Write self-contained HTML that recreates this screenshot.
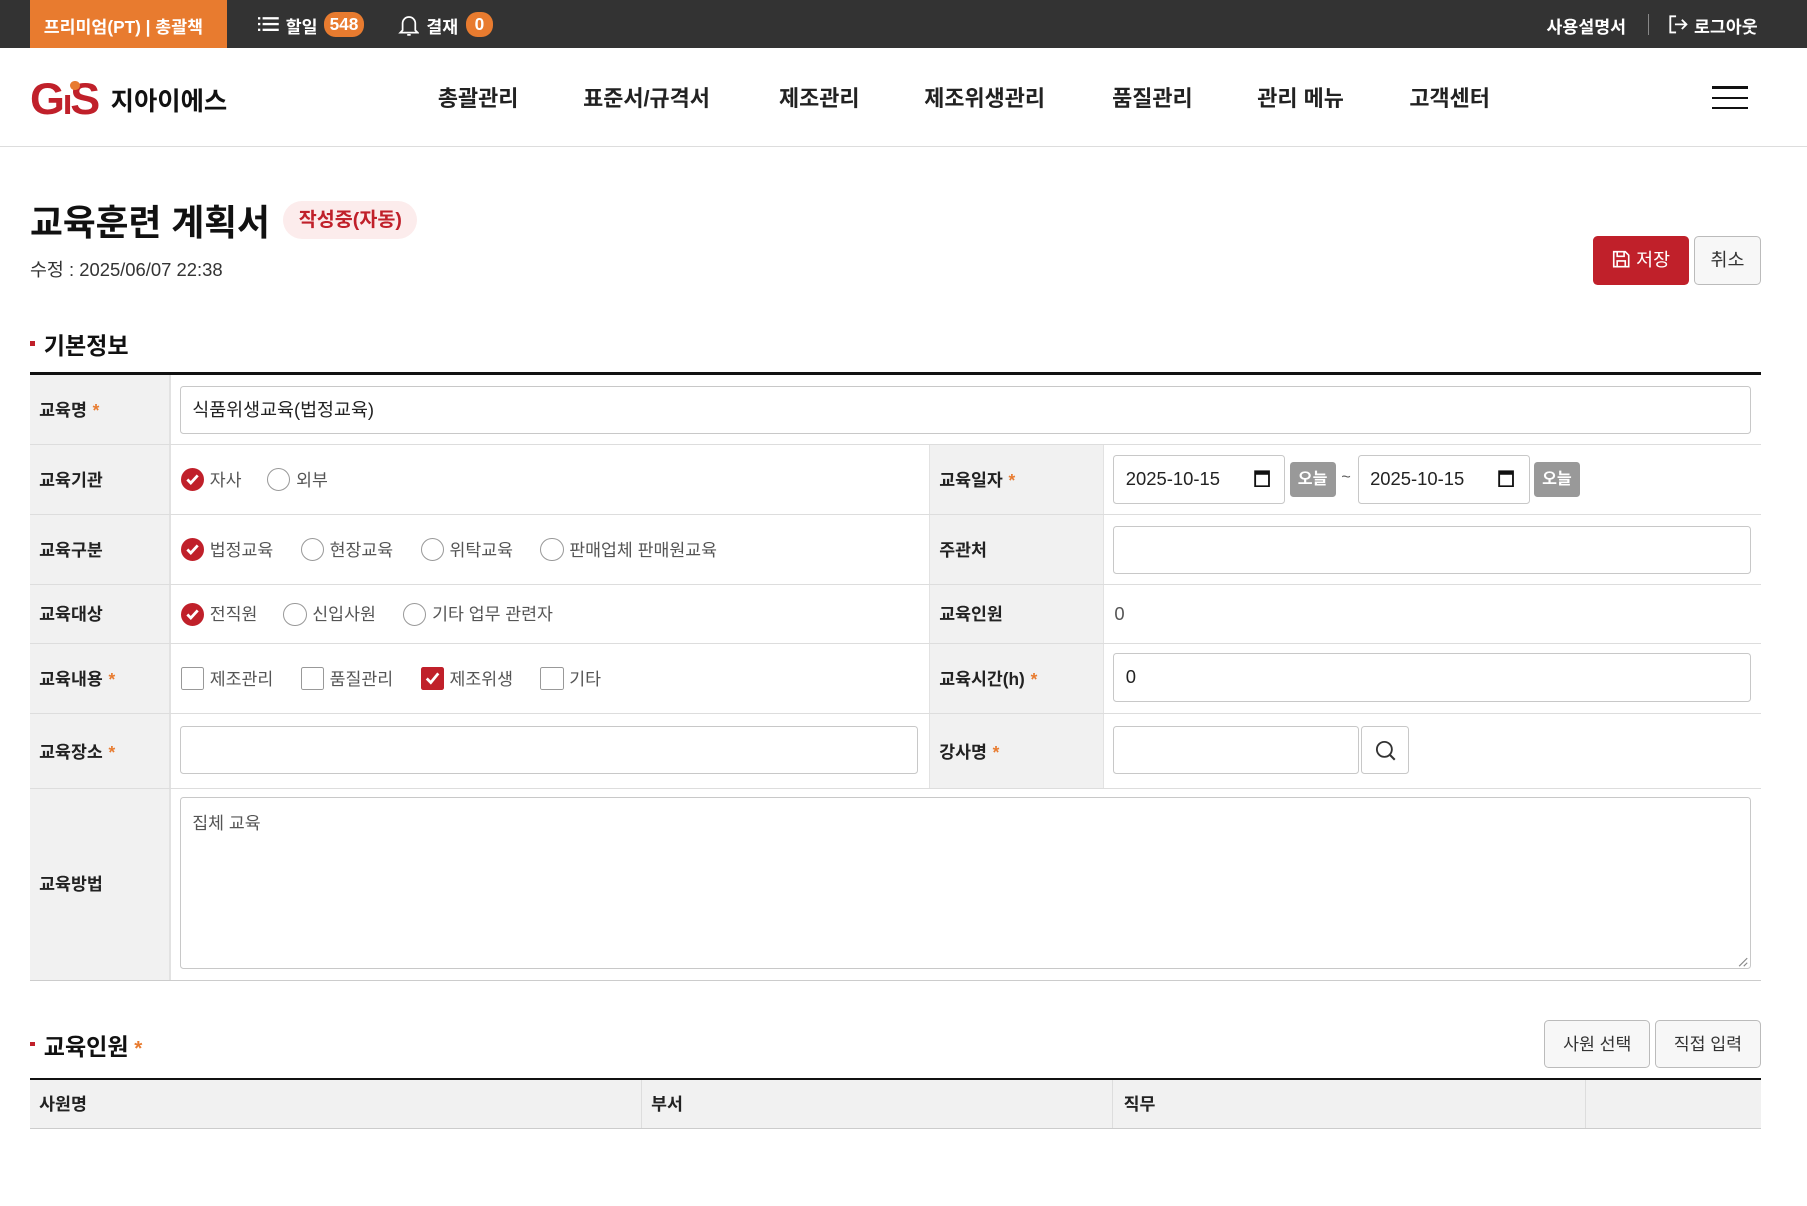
<!DOCTYPE html>
<html><head><meta charset="utf-8"><style>
html,body{margin:0;padding:0;width:1807px;height:1206px;overflow:hidden;background:#fff}
#w{position:relative;width:1568px;height:1047px;zoom:1.15242;font-family:"Liberation Sans","Noto Sans CJK KR",sans-serif;color:#222}
.a{position:absolute}
.top{left:0;top:0;width:1568px;height:42px;background:#333}
.wt{color:#fff;font-weight:bold;font-size:15px}
.bd{border-radius:10px;background:#e87b2f;color:#fff;font-weight:bold;font-size:15px;padding:1px 5px;line-height:20px}
.nav{font-size:19px;font-weight:bold;color:#222;top:71px}
.lbl{font-size:15px;font-weight:bold;color:#222;margin-top:-2px}
.star{color:#e87b2f;margin-left:5px}
.inp{border:1px solid #c8c8c8;border-radius:3px;background:#fff;box-sizing:border-box;font-size:16px;color:#222;padding-left:10px}
.hl{height:1px;background:#ddd;left:26px;width:1502px}
.opt{font-size:15px;color:#555;margin-top:-2px}
.rc{width:20px;height:20px;border-radius:50%;border:1px solid #999;box-sizing:border-box;background:#fff}
.rc.on{background:#c0202a;border-color:#c0202a}
.cb{width:20px;height:20px;border:1px solid #999;box-sizing:border-box;background:#fff;border-radius:2px}
.cb.on{background:#c0202a;border-color:#c0202a}
.btn{border:1px solid #bbb;border-radius:4px;background:#f7f7f7;box-sizing:border-box;font-size:15px;color:#333;text-align:center}
.today{background:#999;color:#fff;font-size:14px;font-weight:bold;border-radius:3px;width:40px;height:30px;line-height:30px;text-align:center}
</style></head><body><div id="w">
<div class="a top"></div>
<div class="a" style="left:26px;top:0;width:171px;height:42px;background:#e87b2f"></div>
<div class="a wt" style="left:38px;top:11px">프리미엄(PT) | 총괄책</div>
<svg class="a" style="left:224px;top:14px" width="18" height="14"><g fill="#fff"><rect x="0" y="1" width="2" height="2"/><rect x="0" y="6" width="2" height="2"/><rect x="0" y="11" width="2" height="2"/><rect x="4" y="1" width="14" height="2"/><rect x="4" y="6" width="14" height="2"/><rect x="4" y="11" width="14" height="2"/></g></svg>
<div class="a wt" style="left:248px;top:11px">할일</div>
<div class="a bd" style="left:281px;top:10px">548</div>
<svg class="a" style="left:345px;top:11px" width="19" height="21"><path d="M4 15V9a5.5 5.5 0 0 1 11 0v6l2 2H2z M8 19h3" fill="none" stroke="#fff" stroke-width="1.5"/></svg>
<div class="a wt" style="left:370px;top:11px">결재</div>
<div class="a bd" style="left:404px;top:10px;width:14px;text-align:center">0</div>
<div class="a wt" style="left:1342px;top:11px">사용설명서</div>
<div class="a" style="left:1430px;top:12px;width:1px;height:18px;background:#888"></div>
<svg class="a" style="left:1447px;top:12px" width="18" height="18"><path d="M7 2H2v14h5 M6 9h10 M12 5l4 4-4 4" fill="none" stroke="#fff" stroke-width="1.6"/></svg>
<div class="a wt" style="left:1470px;top:11px">로그아웃</div>

<div class="a" style="left:26px;top:63px;font-size:39px;font-weight:900;color:#c0202a;letter-spacing:-2px;font-family:'Liberation Sans',sans-serif">G<span style="font-size:31px">ı</span>S</div>
<div class="a" style="left:61px;top:70px;width:8px;height:8px;border-radius:50%;background:#e87b2f"></div>
<div class="a" style="left:96px;top:71px;font-size:22px;font-weight:bold;color:#111">지아이에스</div>
<div class="a nav" style="left:380px">총괄관리</div>
<div class="a nav" style="left:506px">표준서/규격서</div>
<div class="a nav" style="left:676px">제조관리</div>
<div class="a nav" style="left:802px">제조위생관리</div>
<div class="a nav" style="left:965px">품질관리</div>
<div class="a nav" style="left:1091px">관리 메뉴</div>
<div class="a nav" style="left:1223px">고객센터</div>
<div class="a" style="left:1486px;top:75px;width:31px;height:2px;background:#111"></div>
<div class="a" style="left:1486px;top:84px;width:31px;height:2px;background:#111"></div>
<div class="a" style="left:1486px;top:93px;width:31px;height:2px;background:#111"></div>
<div class="a" style="left:0;top:127px;width:1568px;height:1px;background:#ddd"></div>

<div class="a" style="left:26px;top:169px;font-size:31px;font-weight:bold;color:#111">교육훈련 계획서</div>
<div class="a" style="left:246px;top:174px;width:116px;height:33px;border-radius:17px;background:#fcecec;color:#c0202a;font-size:17px;font-weight:bold;text-align:center;line-height:33px">작성중(자동)</div>
<div class="a" style="left:26px;top:222px;font-size:16px;color:#333">수정 : 2025/06/07 22:38</div>
<div class="a" style="left:1382px;top:205px;width:84px;height:42px;background:#c0202a;border-radius:4px;color:#fff;font-size:16px;line-height:42px;text-align:center"><svg width="16" height="16" style="vertical-align:-2px;margin-right:5px"><path d="M1.5 1.5h10l3 3v10h-13z M4.5 1.5v4h6v-4 M4.5 14.5v-5h7v5" fill="none" stroke="#fff" stroke-width="1.4"/></svg>저장</div>
<div class="a btn" style="left:1470px;top:205px;width:58px;height:42px;line-height:40px;font-size:16px">취소</div>

<div class="a" style="left:26px;top:296px;width:4px;height:4px;background:#c0202a"></div>
<div class="a" style="left:38px;top:284px;font-size:20px;font-weight:bold;color:#111">기본정보</div>

<div class="a" style="left:26px;top:325px;width:121px;height:525px;background:#f1f1f1"></div>
<div class="a" style="left:806px;top:385px;width:151px;height:299px;background:#f1f1f1"></div>
<div class="a" style="left:147px;top:325px;width:1px;height:525px;background:#e2e2e2"></div>
<div class="a" style="left:806px;top:385px;width:1px;height:299px;background:#e2e2e2"></div>
<div class="a" style="left:957px;top:385px;width:1px;height:299px;background:#e2e2e2"></div>
<div class="a" style="left:26px;top:323px;width:1502px;height:2px;background:#111"></div>
<div class="a hl" style="top:385px"></div>
<div class="a hl" style="top:446px"></div>
<div class="a hl" style="top:507px"></div>
<div class="a hl" style="top:558px"></div>
<div class="a hl" style="top:619px"></div>
<div class="a hl" style="top:684px"></div>
<div class="a hl" style="top:850px;background:#ccc"></div>

<div class="a lbl" style="left:34px;top:346px">교육명<span class="star">*</span></div>
<div class="a inp" style="left:156px;top:335px;width:1363px;height:42px;line-height:40px">식품위생교육(법정교육)</div>

<div class="a lbl" style="left:34px;top:406px">교육기관</div>
<div class="a rc on" style="left:157px;top:406px"></div><svg class="a" style="left:157px;top:406px" width="20" height="20"><path d="M5.5 10l3 3 6-6.5" fill="none" stroke="#fff" stroke-width="2.4"/></svg>
<div class="a opt" style="left:182px;top:406px">자사</div>
<div class="a rc" style="left:232px;top:406px"></div><div class="a opt" style="left:257px;top:406px">외부</div>

<div class="a lbl" style="left:815px;top:406px">교육일자<span class="star">*</span></div>
<div class="a inp" style="left:966px;top:395px;width:149px;height:42px;line-height:40px">2025-10-15</div>
<svg class="a" style="left:1088px;top:407px" width="14" height="16"><rect x="1" y="2" width="12" height="13" fill="none" stroke="#111" stroke-width="1.6"/><rect x="1" y="2" width="12" height="3" fill="#111"/></svg>
<div class="a today" style="left:1119px;top:401px">오늘</div>
<div class="a" style="left:1164px;top:406px;font-size:14px;color:#555">~</div>
<div class="a inp" style="left:1178px;top:395px;width:150px;height:42px;line-height:40px">2025-10-15</div>
<svg class="a" style="left:1300px;top:407px" width="14" height="16"><rect x="1" y="2" width="12" height="13" fill="none" stroke="#111" stroke-width="1.6"/><rect x="1" y="2" width="12" height="3" fill="#111"/></svg>
<div class="a today" style="left:1331px;top:401px">오늘</div>

<div class="a lbl" style="left:34px;top:467px">교육구분</div>
<div class="a rc on" style="left:157px;top:467px"></div><svg class="a" style="left:157px;top:467px" width="20" height="20"><path d="M5.5 10l3 3 6-6.5" fill="none" stroke="#fff" stroke-width="2.4"/></svg>
<div class="a opt" style="left:182px;top:467px">법정교육</div>
<div class="a rc" style="left:261px;top:467px"></div><div class="a opt" style="left:286px;top:467px">현장교육</div>
<div class="a rc" style="left:365px;top:467px"></div><div class="a opt" style="left:390px;top:467px">위탁교육</div>
<div class="a rc" style="left:469px;top:467px"></div><div class="a opt" style="left:494px;top:467px">판매업체 판매원교육</div>
<div class="a lbl" style="left:815px;top:467px">주관처</div>
<div class="a inp" style="left:966px;top:456px;width:553px;height:42px"></div>

<div class="a lbl" style="left:34px;top:523px">교육대상</div>
<div class="a rc on" style="left:157px;top:523px"></div><svg class="a" style="left:157px;top:523px" width="20" height="20"><path d="M5.5 10l3 3 6-6.5" fill="none" stroke="#fff" stroke-width="2.4"/></svg>
<div class="a opt" style="left:182px;top:523px">전직원</div>
<div class="a rc" style="left:246px;top:523px"></div><div class="a opt" style="left:271px;top:523px">신입사원</div>
<div class="a rc" style="left:350px;top:523px"></div><div class="a opt" style="left:375px;top:523px">기타 업무 관련자</div>
<div class="a lbl" style="left:815px;top:523px">교육인원</div>
<div class="a" style="left:967px;top:523px;font-size:16px;color:#555">0</div>

<div class="a lbl" style="left:34px;top:579px">교육내용<span class="star">*</span></div>
<div class="a cb" style="left:157px;top:579px"></div><div class="a opt" style="left:182px;top:579px">제조관리</div>
<div class="a cb" style="left:261px;top:579px"></div><div class="a opt" style="left:286px;top:579px">품질관리</div>
<div class="a cb on" style="left:365px;top:579px"></div><svg class="a" style="left:365px;top:579px" width="20" height="20"><path d="M5 10l3.5 3.5 6.5-8" fill="none" stroke="#fff" stroke-width="2.4"/></svg>
<div class="a opt" style="left:390px;top:579px">제조위생</div>
<div class="a cb" style="left:469px;top:579px"></div><div class="a opt" style="left:494px;top:579px">기타</div>
<div class="a lbl" style="left:815px;top:579px">교육시간(h)<span class="star">*</span></div>
<div class="a inp" style="left:966px;top:567px;width:553px;height:42px;line-height:40px">0</div>

<div class="a lbl" style="left:34px;top:642px">교육장소<span class="star">*</span></div>
<div class="a inp" style="left:156px;top:630px;width:641px;height:42px"></div>
<div class="a lbl" style="left:815px;top:642px">강사명<span class="star">*</span></div>
<div class="a inp" style="left:966px;top:630px;width:213px;height:42px"></div>
<div class="a inp" style="left:1181px;top:630px;width:42px;height:42px;padding:0"></div>
<svg class="a" style="left:1192px;top:641px" width="20" height="20"><circle cx="9" cy="9" r="6.5" fill="none" stroke="#333" stroke-width="1.6"/><path d="M14 14l4 4" stroke="#333" stroke-width="1.8"/></svg>

<div class="a lbl" style="left:34px;top:757px">교육방법</div>
<div class="a inp" style="left:156px;top:692px;width:1363px;height:149px;font-size:15px;color:#555;padding-top:9px">집체 교육</div>
<svg class="a" style="left:1508px;top:830px" width="9" height="9"><path d="M8 1L1 8M8 5L5 8" stroke="#888" stroke-width="1"/></svg>

<div class="a" style="left:26px;top:904px;width:4px;height:4px;background:#c0202a"></div>
<div class="a" style="left:38px;top:892px;font-size:20px;font-weight:bold;color:#111">교육인원<span class="star" style="font-size:18px">*</span></div>
<div class="a btn" style="left:1340px;top:885px;width:92px;height:42px;line-height:40px">사원 선택</div>
<div class="a btn" style="left:1436px;top:885px;width:92px;height:42px;line-height:40px">직접 입력</div>
<div class="a" style="left:26px;top:937px;width:1502px;height:42px;background:#f1f1f1"></div>
<div class="a" style="left:26px;top:935px;width:1502px;height:2px;background:#111"></div>
<div class="a" style="left:26px;top:979px;width:1502px;height:1px;background:#ccc"></div>
<div class="a" style="left:556px;top:937px;width:1px;height:42px;background:#ddd"></div>
<div class="a" style="left:965px;top:937px;width:1px;height:42px;background:#ddd"></div>
<div class="a" style="left:1375px;top:937px;width:1px;height:42px;background:#ddd"></div>
<div class="a lbl" style="left:34px;top:948px">사원명</div>
<div class="a lbl" style="left:565px;top:948px">부서</div>
<div class="a lbl" style="left:975px;top:948px">직무</div>
</div></body></html>
